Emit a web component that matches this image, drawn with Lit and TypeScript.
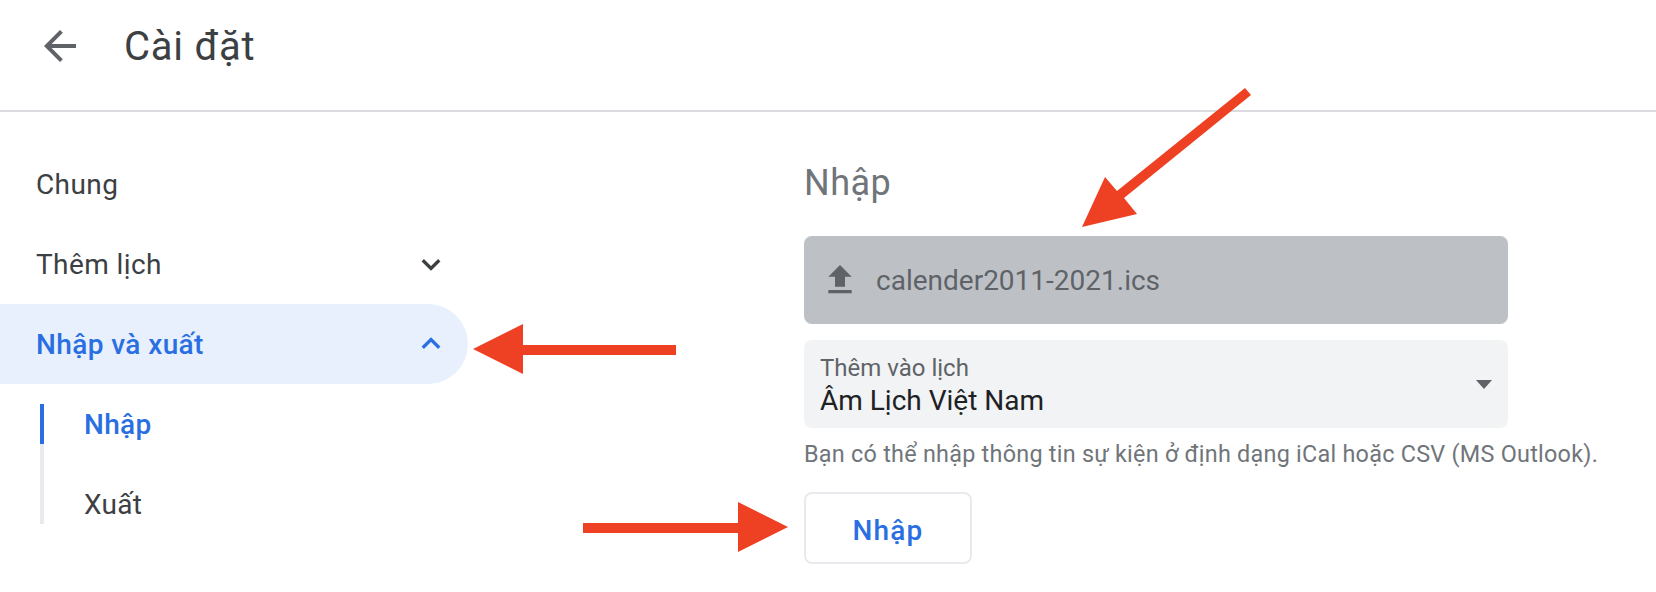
import { LitElement, html, css, svg } from "lit";
import { customElement } from "lit/decorators.js";

@customElement("app-root")
export class AppRoot extends LitElement {
  static styles = css`
    :host {
      display: block;
      position: relative;
      width: 1656px;
      height: 592px;
      overflow: hidden;
      background: #fff;
      font-family: Roboto, "Liberation Sans", sans-serif;
      color: #3c4043;
    }
    .header {
      height: 112px;
      border-bottom: 2px solid #dadce0;
      display: flex;
      align-items: center;
      padding: 0 0 18px 36px;
      box-sizing: border-box;
    }
    .back { width: 48px; height: 48px; display: block; flex: none; }
    .title {
      font-size: 40px;
      line-height: 48px;
      margin: 2px 0 0 40px;
      font-weight: 400;
      letter-spacing: 0.75px;
    }
    .body { display: flex; }
    .side { width: 468px; padding-top: 32px; flex: none; }
    .row {
      height: 80px;
      display: flex;
      align-items: center;
      justify-content: space-between;
      padding: 0 19px 0 36px;
      box-sizing: border-box;
      font-size: 28px;
      letter-spacing: 0.4px;
    }
    .row.on {
      background: #e8f0fe;
      border-radius: 0 40px 40px 0;
      color: #2a6fe2;
      font-weight: 500;
    }
    .row svg { width: 36px; height: 36px; display: block; }
    .subs {
      margin: 20px 0 0 40px;
      border-left: 4px solid #e8eaed;
      width: 300px;
      display: flex;
      flex-direction: column;
      gap: 40px;
      position: relative;
    }
    .sub {
      height: 40px;
      display: flex;
      align-items: center;
      padding-left: 40px;
      font-size: 28px;
      letter-spacing: 0.3px;
      box-sizing: border-box;
    }
    .sub.on { color: #2a6fe2; font-weight: 500; }
    .sub.on::before {
      content: "";
      position: absolute;
      left: -4px;
      top: 0;
      width: 4px;
      height: 40px;
      background: #2a6fe2;
    }
    .main { margin-left: 336px; width: 780px; padding-top: 47px; }
    .h { font-size: 36px; line-height: 48px; color: #70757a; height: 77px; letter-spacing: 0.5px; }
    .file {
      width: 704px;
      height: 88px;
      background: #bdc1c6;
      border-radius: 8px;
      display: flex;
      align-items: center;
      padding-left: 16px;
      box-sizing: border-box;
      font-size: 28px;
      color: #5f6368;
    }
    .file svg { width: 40px; height: 40px; margin-right: 16px; display: block; }
    .select {
      width: 704px;
      height: 88px;
      margin-top: 16px;
      background: #f1f3f4;
      border-radius: 8px;
      display: flex;
      align-items: center;
      justify-content: space-between;
      padding: 3px 16px 0;
      box-sizing: border-box;
    }
    .lab { font-size: 24px; line-height: 28px; color: #5f6368; }
    .val { font-size: 28px; line-height: 32px; color: #202124; margin-top: 3px; }
    .caret { width: 0; height: 0; border: 8px solid transparent; border-top: 9px solid #5f6368; border-bottom: 0; margin-bottom: 3px; }
    .help { font-size: 23.4px; line-height: 28px; color: #70757a; margin-top: 12px; letter-spacing: 0.25px; white-space: nowrap; }
    .btn {
      margin-top: 24px;
      width: 168px;
      height: 72px;
      border: 2px solid #e8eaed;
      border-radius: 8px;
      background: #fff;
      box-sizing: border-box;
      display: flex;
      align-items: center;
      justify-content: center;
      padding-top: 4px;
      color: #2a6fe2;
      font-size: 28px;
      font-weight: 500;
      letter-spacing: 1.2px;
    }
    .arrows { position: absolute; inset: 0; width: 1656px; height: 592px; pointer-events: none; }
  `;

  render() {
    return html`
      <div class="header">
        <svg class="back" viewBox="0 0 24 24" fill="#5f6368"><path d="M20 11H7.83l5.59-5.59L12 4l-8 8 8 8 1.41-1.41L7.83 13H20v-2z"/></svg>
        <div class="title">Cài đặt</div>
      </div>
      <div class="body">
        <div class="side">
          <div class="row">Chung</div>
          <div class="row">Thêm lịch
            <svg viewBox="0 0 24 24" fill="none" stroke="#3c4043" stroke-width="2.2"><path d="M6.5 9.5 12 15l5.5-5.5"/></svg>
          </div>
          <div class="row on">Nhập và xuất
            <svg viewBox="0 0 24 24" fill="none" stroke="#2a6fe2" stroke-width="2.2"><path d="M6.5 14.5 12 9l5.5 5.5"/></svg>
          </div>
          <div class="subs">
            <div class="sub on">Nhập</div>
            <div class="sub">Xuất</div>
          </div>
        </div>
        <div class="main">
          <div class="h">Nhập</div>
          <div class="file">
            <svg viewBox="0 0 24 24" fill="#5f6368"><path d="M5 20h14v-2H5v2zm0-10h4v6h6v-6h4l-7-7-7 7z"/></svg>
            calender2011-2021.ics
          </div>
          <div class="select">
            <div><div class="lab">Thêm vào lịch</div><div class="val">Âm Lịch Việt Nam</div></div>
            <div class="caret"></div>
          </div>
          <div class="help">Bạn có thể nhập thông tin sự kiện ở định dạng iCal hoặc CSV (MS Outlook).</div>
          <div class="btn">Nhập</div>
        </div>
      </div>
      <svg class="arrows" viewBox="0 0 1656 592" fill="#ee4023">
        ${svg`<path d="M473 349 523 324V345H676V355H523V374Z"/>
        <path d="M583 523H738V502L788 527 738 552V533H583Z"/>
        <path d="M1245 88 1251 95 1124 198 1137 214 1082 227 1105 177 1117 191Z"/>`}
      </svg>
    `;
  }
}
